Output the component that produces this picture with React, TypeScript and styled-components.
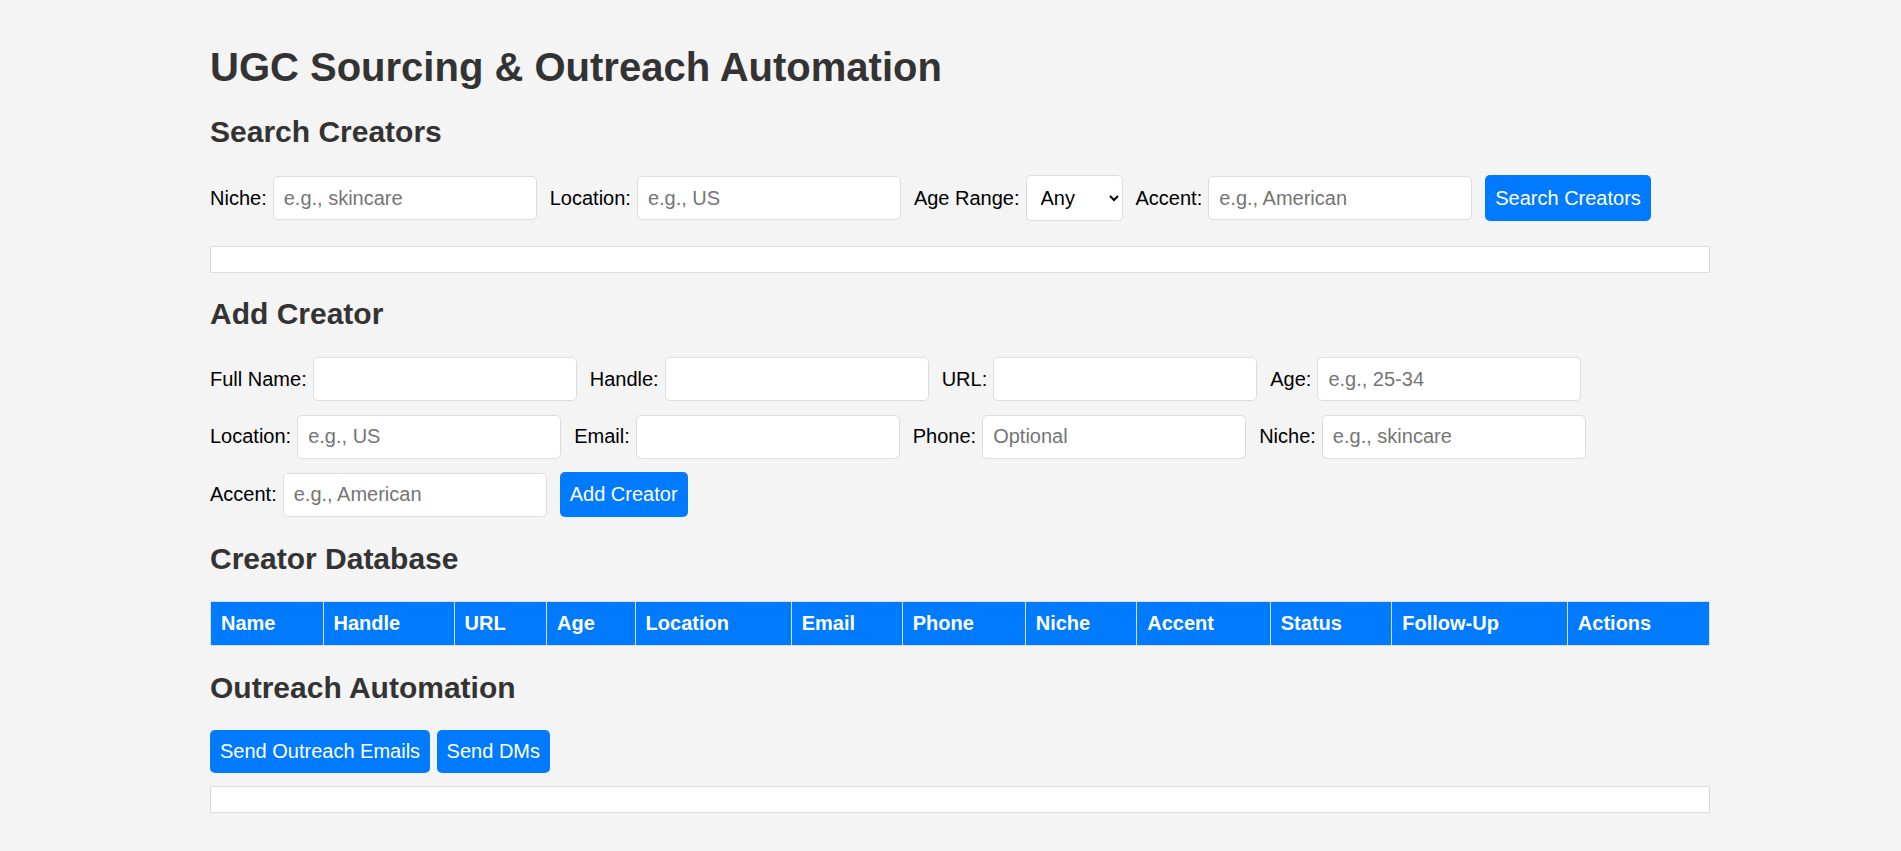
import React from 'react'
import styled, { createGlobalStyle } from 'styled-components'

const GlobalStyle = createGlobalStyle`
    body {
        margin: 0;
        background: #f4f4f4;
        font-family: 'Liberation Sans', Arial, sans-serif;
        font-size: 20px;
        color: #000;
    }
`

const Container = styled.div`
    width: 1500px;
    margin: 0 0 0 210px;
    padding: 44px 0 38px;
`

const Title = styled.h1`
    margin: 0 0 25px;
    color: #333;
    font-size: 40px;
    line-height: 46px;
    font-weight: 700;
`

const SectionTitle = styled.h2<{ $top?: number; $bottom?: number }>`
    margin: ${p => p.$top ?? 0}px 0 ${p => p.$bottom ?? 26}px;
    color: #333;
    font-size: 30px;
    line-height: 34px;
    font-weight: 700;
`

const FieldRow = styled.div<{ $wrap?: boolean }>`
    display: flex;
    flex-wrap: ${p => (p.$wrap ? 'wrap' : 'nowrap')};
    align-items: center;
    column-gap: 13px;
    row-gap: 13.5px;
`

const Field = styled.label`
    display: flex;
    align-items: center;
    gap: 6px;
    line-height: 23px;
`

const TextInput = styled.input`
    box-sizing: border-box;
    width: 264px;
    height: 44px;
    padding: 10px;
    border: 1px solid #ddd;
    border-radius: 5px;
    background: #fff;
    font-family: inherit;
    font-size: 20px;
    color: #000;

    &::placeholder {
        color: #757575;
    }
`

const Select = styled.select`
    box-sizing: border-box;
    width: 97px;
    height: 46px;
    padding: 0 6px 0 10px;
    border: 1px solid #ddd;
    border-radius: 5px;
    background: #fff;
    font-family: inherit;
    font-size: 20px;
    color: #000;
`

const Button = styled.button<{ $h?: number }>`
    box-sizing: border-box;
    height: ${p => p.$h ?? 43}px;
    padding: 0 10px;
    border: none;
    border-radius: 5px;
    background: #007bff;
    color: #fff;
    font-family: inherit;
    font-size: 20px;
    line-height: 23px;
    cursor: pointer;
`

const ResultsBox = styled.div<{ $top: number; $bottom?: number }>`
    box-sizing: border-box;
    height: 27px;
    margin: ${p => p.$top}px 0 ${p => p.$bottom ?? 0}px;
    border: 1px solid #ddd;
    background: #fff;
`

const ButtonRow = styled.div`
    display: flex;
    gap: 6.5px;
`

const Table = styled.table`
    width: 100%;
    table-layout: fixed;
    border-collapse: collapse;
`

const Col = styled.col<{ $w: number }>`
    width: ${p => p.$w}px;
`

const HeadCell = styled.th`
    box-sizing: border-box;
    height: 44px;
    padding: 10px;
    border: 1px solid #ddd;
    background: #007bff;
    color: #fff;
    font-size: 20px;
    line-height: 23px;
    font-weight: 700;
    text-align: left;
    white-space: nowrap;
`

const columns: [string, number][] = [
    ['Name', 112.5],
    ['Handle', 131],
    ['URL', 92.5],
    ['Age', 88.5],
    ['Location', 156],
    ['Email', 111],
    ['Phone', 123],
    ['Niche', 111.5],
    ['Accent', 133.5],
    ['Status', 121.5],
    ['Follow-Up', 175.5],
    ['Actions', 142],
]

const creatorFields: [string, string][] = [
    ['Full Name:', ''],
    ['Handle:', ''],
    ['URL:', ''],
    ['Age:', 'e.g., 25-34'],
    ['Location:', 'e.g., US'],
    ['Email:', ''],
    ['Phone:', 'Optional'],
    ['Niche:', 'e.g., skincare'],
    ['Accent:', 'e.g., American'],
]

const App = () => (
    <>
        <GlobalStyle />
        <Container>
            <Title>UGC Sourcing &amp; Outreach Automation</Title>

            <SectionTitle>Search Creators</SectionTitle>
            <FieldRow>
                <Field>
                    Niche: <TextInput placeholder="e.g., skincare" />
                </Field>
                <Field>
                    Location: <TextInput placeholder="e.g., US" />
                </Field>
                <Field>
                    Age Range:
                    <Select defaultValue="any">
                        <option value="any">Any</option>
                        <option value="18-24">18-24</option>
                        <option value="25-34">25-34</option>
                        <option value="35-44">35-44</option>
                        <option value="45+">45+</option>
                    </Select>
                </Field>
                <Field>
                    Accent: <TextInput placeholder="e.g., American" />
                </Field>
                <Button $h={46}>Search Creators</Button>
            </FieldRow>
            <ResultsBox $top={25} $bottom={24} />

            <SectionTitle>Add Creator</SectionTitle>
            <FieldRow $wrap>
                {creatorFields.map(([label, placeholder]) => (
                    <Field key={label}>
                        {label}
                        <TextInput placeholder={placeholder} />
                    </Field>
                ))}
                <Button $h={45}>Add Creator</Button>
            </FieldRow>

            <SectionTitle $top={25} $bottom={25}>
                Creator Database
            </SectionTitle>
            <Table>
                <colgroup>
                    {columns.map(([name, w]) => (
                        <Col key={name} $w={w} />
                    ))}
                </colgroup>
                <thead>
                    <tr>
                        {columns.map(([name]) => (
                            <HeadCell key={name}>{name}</HeadCell>
                        ))}
                    </tr>
                </thead>
                <tbody />
            </Table>

            <SectionTitle $top={25} $bottom={25}>
                Outreach Automation
            </SectionTitle>
            <ButtonRow>
                <Button>Send Outreach Emails</Button>
                <Button>Send DMs</Button>
            </ButtonRow>
            <ResultsBox $top={13} />
        </Container>
    </>
)

export default App
